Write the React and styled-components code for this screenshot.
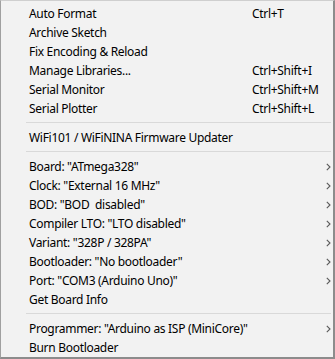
import React from 'react';
import styled, { createGlobalStyle } from 'styled-components';

const Global = createGlobalStyle`
  html, body { margin: 0; padding: 0; background: #fff; }
  body { font-family: "Noto Sans", "Open Sans", sans-serif; }
`;

const sections = [
  [
    { label: 'Auto Format', keys: 'Ctrl+T' },
    { label: 'Archive Sketch' },
    { label: 'Fix Encoding & Reload' },
    { label: 'Manage Libraries...', keys: 'Ctrl+Shift+I' },
    { label: 'Serial Monitor', keys: 'Ctrl+Shift+M' },
    { label: 'Serial Plotter', keys: 'Ctrl+Shift+L' },
  ],
  [{ label: 'WiFi101 / WiFiNINA Firmware Updater' }],
  [
    { label: 'Board: "ATmega328"', sub: true },
    { label: 'Clock: "External 16 MHz"', sub: true },
    { label: 'BOD: "BOD  disabled"', sub: true },
    { label: 'Compiler LTO: "LTO disabled"', sub: true },
    { label: 'Variant: "328P / 328PA"', sub: true },
    { label: 'Bootloader: "No bootloader"', sub: true },
    { label: 'Port: "COM3 (Arduino Uno)"', sub: true },
    { label: 'Get Board Info' },
  ],
  [
    { label: 'Programmer: "Arduino as ISP (MiniCore)"', sub: true },
    { label: 'Burn Bootloader' },
  ],
];

const Chevron = () => (
  <svg width="5" height="8" viewBox="0 0 5 8">
    <path d="M0.8 0.8 L4 4 L0.8 7.2" fill="none" stroke="#5a5a5a" strokeWidth="1.1" />
  </svg>
);

const App = () => (
  <>
    <Global />
    <Menu>
      {sections.map((items, i) => (
        <React.Fragment key={i}>
          {i > 0 && <Separator />}
          {items.map((it) => (
            <Item key={it.label}>
              <Label>{it.label}</Label>
              {it.keys && <Keys>{it.keys}</Keys>}
              {it.sub && <Arrow><Chevron /></Arrow>}
            </Item>
          ))}
        </React.Fragment>
      ))}
    </Menu>
  </>
);

export default App;

const Menu = styled.div`
  box-sizing: border-box;
  width: 335px;
  height: 359px;
  padding: 3px 0 0 0;
  background: #f2f2f2;
  border-left: 1px solid #a0a0a0;
  border-top: 1px solid #cfcfcf;
  border-right: 2px solid #8c8c8c;
  border-bottom: 2px solid #8c8c8c;
  display: flex;
  flex-direction: column;
`;

const Item = styled.div`
  height: 19px;
  display: flex;
  align-items: center;
  padding-left: 28px;
  font-size: 12px;
  letter-spacing: -0.3px;
  color: #000;
  white-space: pre;
`;

const Label = styled.span`
  flex: 1;
`;

const Keys = styled.span`
  width: 81px;
`;

const Arrow = styled.span`
  display: flex;
  align-items: center;
  width: 7px;
`;

const Separator = styled.div`
  height: 1px;
  margin: 4px 2px 5px 25px;
  background: #d9d9d9;
`;
